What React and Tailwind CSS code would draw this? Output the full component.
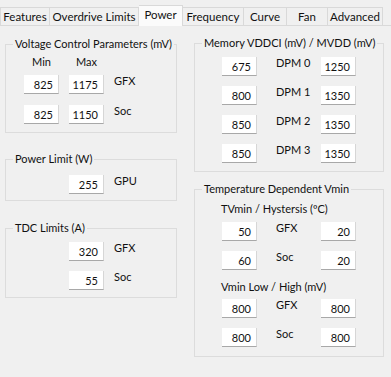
import React from "react";

const tabs = [
  { name: "Features", w: "w-[50px]" },
  { name: "Overdrive Limits", w: "w-[89px]" },
  { name: "Power", w: "w-[44px]", active: true },
  { name: "Frequency", w: "w-[61px]" },
  { name: "Curve", w: "w-[43px]" },
  { name: "Fan", w: "w-[41px]" },
  { name: "Advanced", w: "w-[55px]" },
];

function Box({ v }) {
  return (
    <div className="w-[35px] h-[19px] shrink-0 bg-white border-b border-r border-b-[#a8a8a8] border-r-[#d6d6d6] flex items-center justify-end pr-[5px] leading-none">
      {v}
    </div>
  );
}

function Group({ title, className, children }) {
  return (
    <div className={"relative border border-[#dcdcdc] " + className}>
      <span className="absolute -top-[9px] left-[7px] bg-[#f0f0f0] px-[2px] leading-[16px] whitespace-nowrap">
        {title}
      </span>
      {children}
    </div>
  );
}

function Label({ children, className = "" }) {
  return <span className={"leading-[16px] -mt-[2px] whitespace-nowrap " + className}>{children}</span>;
}

function TripleRow({ a, label, b, className = "" }) {
  return (
    <div className={"flex items-start " + className}>
      <Box v={a} />
      <Label className="w-[64px] pl-[19px]">{label}</Label>
      <Box v={b} />
    </div>
  );
}

export default function App() {
  return (
    <div
      className="w-[391px] h-[377px] bg-[#f0f0f0] text-[#111] text-[11px] overflow-hidden"
      style={{ fontFamily: "Lato, 'Noto Sans', sans-serif" }}
    >
      {/* tab strip */}
      <div className="flex items-end h-[26px] border-b border-[#d9d9d9]">
        {tabs.map((t, i) =>
          t.active ? (
            <div
              key={t.name}
              className={"relative z-10 -mb-px h-[21px] bg-[#fbfbfb] border-t border-r border-[#d9d9d9] flex items-center justify-center pb-[2px] text-[11.5px] " + t.w}
            >
              {t.name}
            </div>
          ) : (
            <div
              key={t.name}
              className={"h-[18px] border-t border-r border-[#d9d9d9] flex items-center justify-center text-[11.5px] " + (i === 0 ? "border-l " : "") + t.w}
            >
              {t.name}
            </div>
          )
        )}
      </div>

      <div className="flex">
        {/* left column */}
        <div className="ml-[5px] w-[172px] flex flex-col">
          <Group title="Voltage Control Parameters (mV)" className="mt-[18px] h-[89px] pt-[9px] pl-[18px]">
            <div className="flex h-[16px] leading-[16px]">
              <span className="w-[35px] text-center">Min</span>
              <span className="w-[35px] ml-[10px] text-center">Max</span>
            </div>
            <div className="flex items-start mt-[5px]">
              <Box v="825" />
              <div className="ml-[10px]"><Box v="1175" /></div>
              <Label className="ml-[10px]">GFX</Label>
            </div>
            <div className="flex items-start mt-[11px]">
              <Box v="825" />
              <div className="ml-[10px]"><Box v="1150" /></div>
              <Label className="ml-[10px]">Soc</Label>
            </div>
          </Group>

          <Group title="Power Limit (W)" className="mt-[26px] h-[42px] pt-[15px] pl-[63px]">
            <div className="flex items-start">
              <Box v="255" />
              <Label className="ml-[10px]">GPU</Label>
            </div>
          </Group>

          <Group title="TDC Limits (A)" className="mt-[27px] h-[70px] pt-[13px] pl-[63px]">
            <div className="flex items-start">
              <Box v="320" />
              <Label className="ml-[10px]">GFX</Label>
            </div>
            <div className="flex items-start mt-[10px]">
              <Box v="55" />
              <Label className="ml-[10px]">Soc</Label>
            </div>
          </Group>
        </div>

        {/* right column */}
        <div className="ml-[17px] w-[190px] flex flex-col">
          <Group title="Memory VDDCI (mV) / MVDD (mV)" className="mt-[17px] h-[129px] pt-[13px] pl-[27px]">
            <TripleRow a="675" label="DPM 0" b="1250" />
            <TripleRow a="800" label="DPM 1" b="1350" className="mt-[10px]" />
            <TripleRow a="850" label="DPM 2" b="1350" className="mt-[10px]" />
            <TripleRow a="850" label="DPM 3" b="1350" className="mt-[10px]" />
          </Group>

          <Group title="Temperature Dependent Vmin" className="mt-[17px] h-[168px] pt-[11px] pl-[27px]">
            <div className="leading-[16px] -ml-px">TVmin / Hystersis (ºC)</div>
            <TripleRow a="50" label="GFX" b="20" className="mt-[5px]" />
            <TripleRow a="60" label="Soc" b="20" className="mt-[10px]" />
            <div className="leading-[16px] -ml-px mt-[9px]">Vmin Low / High (mV)</div>
            <TripleRow a="800" label="GFX" b="800" className="mt-[4px]" />
            <TripleRow a="800" label="Soc" b="800" className="mt-[10px]" />
          </Group>
        </div>
      </div>
    </div>
  );
}
